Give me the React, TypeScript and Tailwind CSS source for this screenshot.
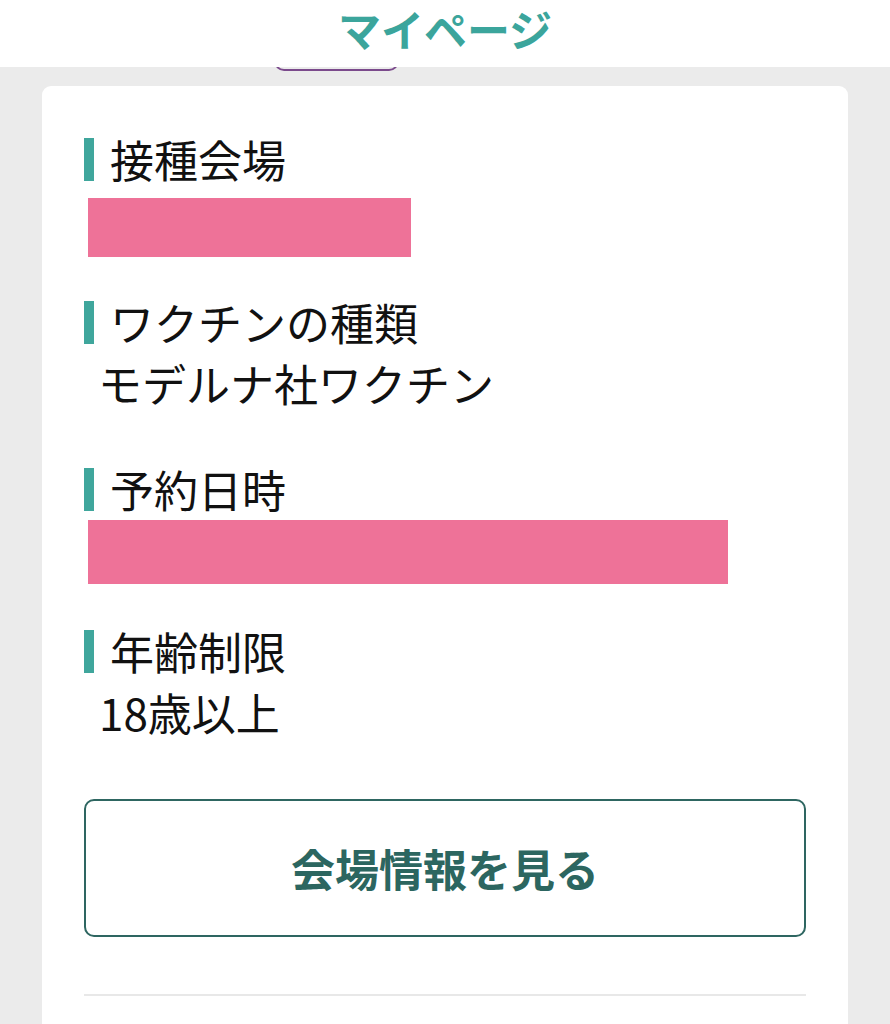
import React from "react";

const font = { fontFamily: '"Noto Sans CJK JP", "Noto Sans", sans-serif' };

const Label = ({ children, className = "" }: { children: React.ReactNode; className?: string }) => (
  <div className={`flex items-center ${className}`}>
    <span className="block w-[10px] h-[43px] bg-[#3fa69c]" />
    <span className="ml-[16px] text-[44px] leading-[50px] text-[#111]">{children}</span>
  </div>
);

export default function App() {
  return (
    <div className="min-h-[1024px] bg-[#ebebeb] overflow-hidden" style={font}>
      <header className="relative z-10 h-[67px] bg-white flex items-start justify-center">
        <h1 className="text-[43px] leading-[56px] font-bold text-[#3ba59c]">マイページ</h1>
      </header>

      {/* tab peeking out below the header */}
      <div className="relative -mt-[20px] ml-[274px] w-[125px] h-[24px] border-2 border-t-0 border-[#7b4a8c] rounded-b-[10px]" />

      <main className="mx-[42px] mt-[15px] bg-white rounded-t-[9px] px-[42px] pt-[48px] pb-[40px]">
        <Label>接種会場</Label>
        <div className="mt-[14px] ml-[4px] w-[323px] h-[59px] bg-[#ee7298]" />

        <Label className="mt-[40px]">ワクチンの種類</Label>
        <p className="mt-[11px] ml-[14px] text-[44px] leading-[50px] text-[#111]">モデルナ社ワクチン</p>

        <Label className="mt-[56px]">予約日時</Label>
        <div className="mt-[6px] ml-[4px] w-[640px] h-[64px] bg-[#ee7298]" />

        <Label className="mt-[42px]">年齢制限</Label>
        <p className="mt-[11px] ml-[15px] text-[44px] leading-[50px] text-[#111]">18歳以上</p>

        <button className="mt-[62px] w-full h-[138px] border-[2.5px] border-[#2e6661] rounded-[10px] bg-white flex items-center justify-center">
          <span className="text-[44px] leading-[50px] font-bold text-[#2c6660]">会場情報を見る</span>
        </button>

        <div className="mt-[57px] h-[2px] bg-[#e8e8e8]" />
      </main>
    </div>
  );
}
